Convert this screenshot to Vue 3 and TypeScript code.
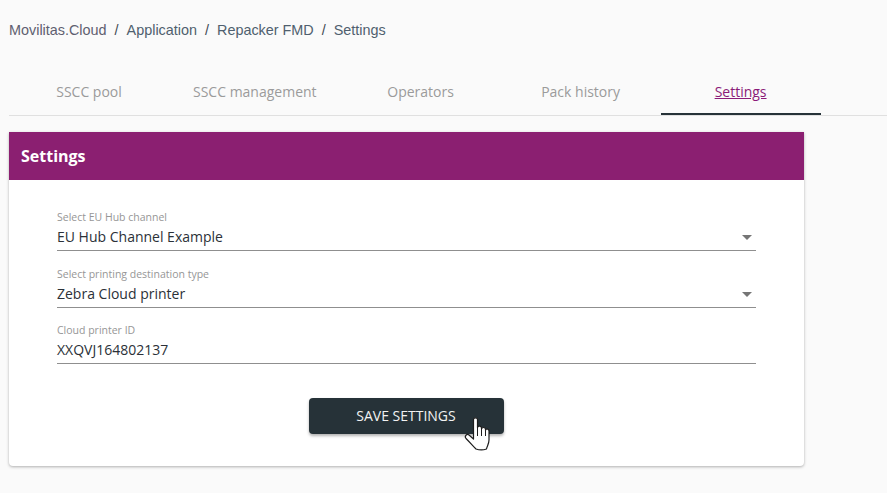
<script setup lang="ts">
const crumbs = ['Movilitas.Cloud', 'Application', 'Repacker FMD', 'Settings']
const tabs = ['SSCC pool', 'SSCC management', 'Operators', 'Pack history', 'Settings']
const fields = [
  { label: 'Select EU Hub channel', value: 'EU Hub Channel Example', select: true },
  { label: 'Select printing destination type', value: 'Zebra Cloud printer', select: true },
  { label: 'Cloud printer ID', value: 'XXQVJ164802137', select: false },
]
</script>

<template>
  <div class="page">
    <nav class="crumbs">
      <template v-for="(c, i) in crumbs" :key="c">
        <span v-if="i > 0" class="sep">/</span>
        <span class="crumb" :class="{ first: i === 0 }">{{ c }}</span>
      </template>
    </nav>
    <div class="tabs">
      <div v-for="t in tabs" :key="t" class="tab" :class="{ active: t === 'Settings' }">
        <span>{{ t }}</span>
      </div>
    </div>
    <section class="card">
      <header class="card-head">Settings</header>
      <div class="card-body">
        <div v-for="f in fields" :key="f.label" class="field">
          <div class="label">{{ f.label }}</div>
          <div class="value">
            <span>{{ f.value }}</span>
            <i v-if="f.select" class="arrow"></i>
          </div>
        </div>
        <div class="actions">
          <button class="save" type="button">
            SAVE SETTINGS
            <svg class="cursor" width="30" height="38" viewBox="0 0 30 38">
              <path
                d="M11.500 4.500C11.500 2.300 15.500 2.300 15.500 4.500L15.500 12.500C16 10.500 19 10.500 19.500 12.800L19.500 14C20 12 23 12 23.500 14.200L23.500 15.300C24 13.500 27 13.500 27 16L27 25C27 29 25 31 24.500 34C21 35.200 17 35 14 34C11.500 31.500 7.500 27 4 23.500C2 21 5 18.500 7 20L11.500 24Z"
                fill="#fff"
                stroke="#1d1d1d"
                stroke-width="1.200"
                stroke-linejoin="round"
              />
              <path d="M15.500 12.500V21M19.500 14V21M23.500 15.300V21" stroke="#1d1d1d" stroke-width="1" fill="none" />
            </svg>
          </button>
        </div>
      </div>
    </section>
  </div>
</template>

<style>
html, body { margin: 0; background: #fafafa; }
</style>

<style scoped>
.page {
  width: 887px;
  height: 493px;
  box-sizing: border-box;
  padding: 0 0 0 9px;
  background: #fafafa;
  overflow: hidden;
  font-family: "Open Sans", sans-serif;
}
.crumbs {
  height: 59px;
  padding-top: 1px;
  box-sizing: border-box;
  display: flex;
  align-items: center;
  font: 14.400px "Liberation Sans", Arial, sans-serif;
  color: #4f5f6e;
}
.crumb.first { color: #5f5f70; }
.sep { margin: 0 8px; color: #3f4a54; }
.tabs {
  display: flex;
  height: 56px;
  border-bottom: 1px solid #e0e0e0;
}
.tab {
  min-width: 160px;
  box-sizing: border-box;
  padding: 9px 24px 0;
  height: 56px;
  display: flex;
  align-items: center;
  justify-content: center;
  font-size: 14px;
  color: #9b9b9b;
}
.tab.active {
  color: #8b1a78;
  text-decoration: underline;
  box-shadow: inset 0 -2px 0 #263238;
}
.card {
  width: 795px;
  margin-top: 16px;
  background: #fff;
  border-radius: 0 0 4px 4px;
  box-shadow: 0 1px 3px rgba(0, 0, 0, 0.3);
}
.card-head {
  height: 48px;
  box-sizing: border-box;
  padding: 0 12px;
  display: flex;
  align-items: center;
  background: #8b1f71;
  color: #fff;
  font-size: 16px;
  font-weight: 700;
}
.card-body {
  padding: 30px 48px 32px;
  height: 286px;
  box-sizing: border-box;
}
.field {
  height: 40px;
  margin-bottom: 16px;
  border-bottom: 1px solid #8f8f8f;
}
.field:nth-child(2) { margin-bottom: 15px; }
.label {
  font-size: 10.500px;
  line-height: 14px;
  color: #969696;
}
.value {
  display: flex;
  align-items: center;
  justify-content: space-between;
  font-size: 14px;
  line-height: 24px;
  color: #2b3138;
  height: 26px;
}
.arrow {
  width: 0;
  height: 0;
  margin-right: 4px;
  border-left: 5px solid transparent;
  border-right: 5px solid transparent;
  border-top: 5px solid #757575;
}
.actions {
  display: flex;
  justify-content: center;
  margin-top: 34px;
}
.save {
  position: relative;
  width: 195px;
  height: 36px;
  padding: 0 1px 2px 0;
  border: 0;
  border-radius: 4px;
  background: #263238;
  color: #f2f2f2;
  font: 500 14px "Open Sans", sans-serif;
  box-shadow: 0 2px 3px rgba(0, 0, 0, 0.3);
}
.cursor {
  position: absolute;
  left: 153px;
  top: 17px;
}
</style>
